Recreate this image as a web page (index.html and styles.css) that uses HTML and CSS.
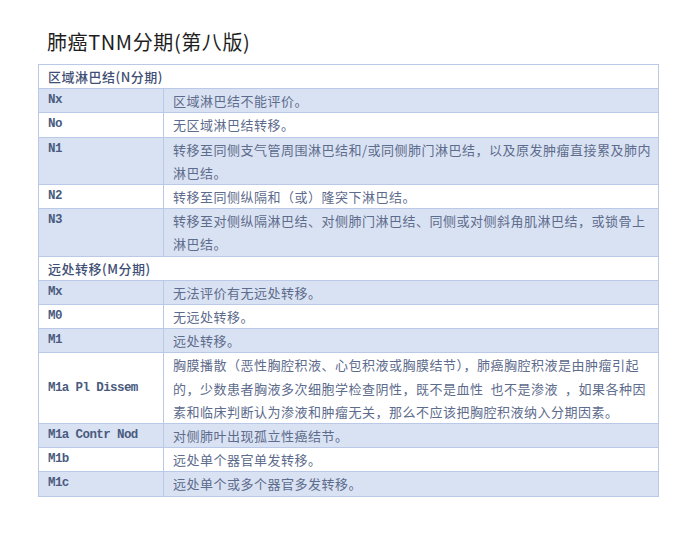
FILE: index.html
```html
<!DOCTYPE html>
<html lang="zh-CN">
<head>
<meta charset="utf-8">
<title>肺癌TNM分期(第八版)</title>
<link rel="stylesheet" href="styles.css">
</head>
<body>
<div class="page">
  <h1 class="title">肺癌TNM分期(第八版)</h1>
  <table class="stage">
    <colgroup><col class="c1"><col class="c2"></colgroup>
    <tbody>
      <tr class="section"><td colspan="2">区域淋巴结(N分期)</td></tr>
      <tr class="alt"><td class="code">Nx</td><td>区域淋巴结不能评价。</td></tr>
      <tr><td class="code">No</td><td>无区域淋巴结转移。</td></tr>
      <tr class="alt"><td class="code">N1</td><td>转移至同侧支气管周围淋巴结和/或同侧肺门淋巴结，以及原发肿瘤直接累及肺内淋巴结。</td></tr>
      <tr><td class="code">N2</td><td>转移至同侧纵隔和（或）隆突下淋巴结。</td></tr>
      <tr class="alt"><td class="code">N3</td><td>转移至对侧纵隔淋巴结、对侧肺门淋巴结、同侧或对侧斜角肌淋巴结，或锁骨上淋巴结。</td></tr>
      <tr class="section"><td colspan="2">远处转移(M分期)</td></tr>
      <tr class="alt"><td class="code">Mx</td><td>无法评价有无远处转移。</td></tr>
      <tr><td class="code">M0</td><td>无远处转移。</td></tr>
      <tr class="alt"><td class="code">M1</td><td>远处转移。</td></tr>
      <tr><td class="code mid">M1a Pl Dissem</td><td>胸膜播散（恶性胸腔积液、心包积液或胸膜结节），肺癌胸腔积液是由肿瘤引起的，少数患者胸液多次细胞学检查阴性，既不是血性&ensp;也不是渗液&ensp;，如果各种因素和临床判断认为渗液和肿瘤无关，那么不应该把胸腔积液纳入分期因素。</td></tr>
      <tr class="alt"><td class="code">M1a Contr Nod</td><td>对侧肺叶出现孤立性癌结节。</td></tr>
      <tr><td class="code">M1b</td><td>远处单个器官单发转移。</td></tr>
      <tr class="alt"><td class="code">M1c</td><td>远处单个或多个器官多发转移。</td></tr>
    </tbody>
  </table>
</div>
</body>
</html>
```

FILE: styles.css
```css
html, body {
  margin: 0;
  padding: 0;
  background: #ffffff;
}

.page {
  padding: 27px 0 0 38px;
  font-family: "Noto Sans CJK SC", "Noto Sans", sans-serif;
}

.title {
  margin: 0 0 8px 9px;
  font-size: 20px;
  line-height: 29px;
  font-weight: normal;
  color: #1e1e1e;
  letter-spacing: 0.6px;
}

.stage {
  border-collapse: collapse;
  width: 620px;
  table-layout: fixed;
  font-size: 13px;
  line-height: 23.2px;
  letter-spacing: 0.5px;
  color: #5d6b8c;
}

.c1 { width: 125px; }
.c2 { width: 495px; }

.stage td {
  border: 1px solid #b9c9e7;
  padding: 0 3px 0 9px;
  vertical-align: top;
}

.stage tr.alt td {
  background: #d9e2f2;
}

.stage .code {
  font-family: "Liberation Mono", "DejaVu Sans Mono", monospace;
  font-size: 12.5px;
  letter-spacing: -0.6px;
  font-weight: bold;
  color: #4a5b80;
}

.stage .code.mid {
  vertical-align: middle;
}

.stage tr.section td {
  color: #3f4f75;
  font-weight: 500;
  background: #ffffff;
}
```
